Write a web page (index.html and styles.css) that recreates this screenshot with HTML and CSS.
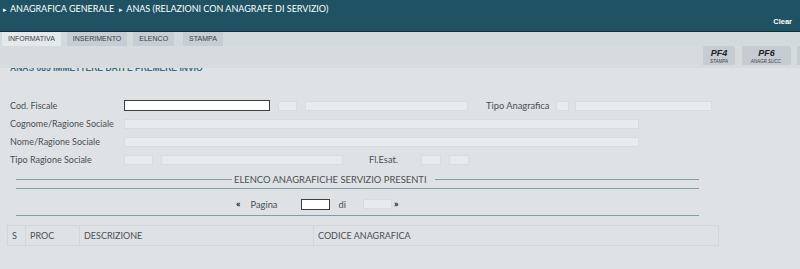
FILE: index.html
```html
<!DOCTYPE html>
<html lang="it">

<head>
  <meta charset="UTF-8" />
  <title>Anagrafica Generale - ANAS</title>
  <link rel="stylesheet" href="styles.css">
</head>

<body>
  <!-- Header -->
  <div class="header">
    <div class="crumbs">
      <span class="crumb"><span class="arrow">&#9656;</span>ANAGRAFICA GENERALE</span>
      <span class="crumb"><span class="arrow">&#9656;</span>ANAS (RELAZIONI CON ANAGRAFE DI SERVIZIO)</span>
    </div>
    <div class="clear">Clear</div>
  </div>

  <!-- Tabs -->
  <div class="tabs">
    <div class="tab active">INFORMATIVA</div>
    <div class="tab">INSERIMENTO</div>
    <div class="tab">ELENCO</div>
    <div class="tab">STAMPA</div>
  </div>

  <!-- Function keys -->
  <div class="toolbar">
    <div class="pf"><b>PF4</b><span>STAMPA</span></div>
    <div class="pf"><b>PF6</b><span>ANAGR.SUCC.</span></div>
    <div class="pf cut"></div>
  </div>

  <div class="content">
    <div class="msg">ANAS 085 IMMETTERE DATI E PREMERE INVIO</div>

    <div class="form">
      <div class="row">
        <label>Cod. Fiscale</label>
        <div class="field active w146"></div>
        <div class="field w19"></div>
        <div class="field w163"></div>
        <label class="inline">Tipo Anagrafica</label>
        <div class="field w12 tight"></div>
        <div class="field w137"></div>
      </div>
      <div class="row">
        <label>Cognome/Ragione Sociale</label>
        <div class="field w515"></div>
      </div>
      <div class="row">
        <label>Nome/Ragione Sociale</label>
        <div class="field w515"></div>
      </div>
      <div class="row">
        <label>Tipo Ragione Sociale</label>
        <div class="field w29"></div>
        <div class="field w182"></div>
        <label class="inline esat">Fl.Esat.</label>
        <div class="field w20"></div>
        <div class="field w20"></div>
      </div>
    </div>

    <!-- Elenco -->
    <div class="section">
      <div class="section-title">
        <div class="line left"></div>
        <span>ELENCO ANAGRAFICHE SERVIZIO PRESENTI</span>
        <div class="line"></div>
      </div>
      <div class="rule"></div>
      <div class="pager">
        <span class="nav">&laquo;</span>
        <span class="pg">Pagina</span>
        <div class="field active w29"></div>
        <span class="di">di</span>
        <div class="field w29"></div>
        <span class="nav">&raquo;</span>
      </div>
      <div class="rule"></div>
    </div>

    <table class="grid">
      <tr>
        <th class="c-s">S</th>
        <th class="c-proc">PROC</th>
        <th class="c-desc">DESCRIZIONE</th>
        <th>CODICE ANAGRAFICA</th>
      </tr>
    </table>
  </div>
</body>

</html>
```

FILE: styles.css
```css
* {
  margin: 0;
  padding: 0;
  box-sizing: border-box;
}

body {
  width: 800px;
  height: 269px;
  overflow: hidden;
  background-color: #dee2e5;
  font-family: "Lato", "Liberation Sans", sans-serif;
  color: #4b4f52;
}

/* Header */
.header {
  height: 32px;
  background-color: #1f5263;
  border-bottom: 1px solid #0f2f3a;
  color: #fff;
  display: flex;
  justify-content: space-between;
  padding: 3px 8px 0 3px;
}

.crumbs {
  display: flex;
  gap: 5px;
  font-size: 9px;
  line-height: 11px;
}

.crumb .arrow {
  font-size: 7px;
  margin-right: 3px;
}

.clear {
  align-self: flex-end;
  margin-bottom: 5px;
  font-family: "Liberation Sans", sans-serif;
  font-weight: bold;
  font-size: 7.5px;
}

/* Tabs */
.tabs {
  display: flex;
  gap: 6px;
  height: 14px;
  padding-left: 2px;
  background-color: #d4d9dc;
}

.tab {
  font-family: "Liberation Sans", sans-serif;
  font-size: 7px;
  line-height: 14px;
  padding: 0 6px;
  background-color: #c6cdd3;
  color: #3a3f44;
}

.tab.active {
  background-color: #e6e9eb;
}

.tab:last-child {
  margin-left: 3px;
}

/* Toolbar */
.toolbar {
  position: relative;
  z-index: 1;
  height: 22px;
  background-color: #d6dbde;
  display: flex;
  justify-content: flex-end;
  gap: 7px;
  overflow: hidden;
}

.pf {
  width: 32px;
  height: 19px;
  background-color: #c5ccd2;
  border-radius: 2px 2px 0 0;
  display: flex;
  flex-direction: column;
  align-items: center;
  font-family: "Liberation Sans", sans-serif;
  font-style: italic;
  color: #222;
}

.pf:nth-child(2) {
  width: 49px;
}

.pf.cut {
  width: 3px;
  margin-left: -1px;
}

.pf b {
  font-size: 9px;
  line-height: 12px;
  margin-top: 1px;
}

.pf span {
  font-size: 4.5px;
  line-height: 5px;
  color: #444;
}

/* Content */
.msg {
  margin-top: -4px;
  padding-left: 10px;
  font-family: "Liberation Sans", sans-serif;
  font-weight: bold;
  font-size: 8.5px;
  line-height: 9px;
  color: #3d6b7e;
}

.form {
  margin-top: 27px;
  padding-left: 10px;
  display: flex;
  flex-direction: column;
  gap: 7px;
}

.row {
  display: flex;
  align-items: center;
  height: 11px;
  gap: 8px;
}

.row label {
  width: 106px;
  font-size: 9px;
  color: #4b4f52;
  white-space: nowrap;
}

.row label.inline {
  width: auto;
  margin-left: 10px;
  font-size: 9.3px;
  margin-right: -1px;
}

.row label.esat {
  margin-left: 18px;
  margin-right: 15px;
}

.field {
  height: 10px;
  background-color: #e8ebed;
  border: 1px solid #d8dcdf;
}

.field.active {
  background-color: #fff;
  border: 1px solid #3b3f42;
  height: 11px;
}

.field.tight + .field {
  margin-left: -2px;
}

.w12 { width: 13px; }
.w19 { width: 19px; }
.w20 { width: 20px; }
.w29 { width: 29px; }
.w137 { width: 137px; }
.w146 { width: 146px; }
.w163 { width: 163px; }
.w182 { width: 182px; }
.w515 { width: 515px; }

/* Section */
.section {
  margin: 8px 0 0 16px;
  width: 683px;
}

.section-title {
  display: flex;
  align-items: center;
  gap: 2px;
  height: 12px;
  font-size: 9.4px;
  color: #4b4f52;
}

.section-title .line {
  flex: 1;
  height: 1px;
  background-color: #7e9ea8;
}

.section-title .line.left {
  flex: none;
  width: 216px;
}

.section-title .line:last-child {
  margin-left: 6px;
}

.rule {
  height: 1px;
  background-color: #7e9ea8;
  margin-top: 3px;
}

.pager {
  display: flex;
  align-items: center;
  height: 24px;
  padding: 6px 0 0 220px;
  font-size: 9.3px;
}

.pager + .rule {
  margin-top: 2px;
}

.pager .nav {
  font-size: 10px;
  font-weight: bold;
  color: #222;
  margin-top: -3px;
}

.pager .pg {
  margin: 0 23px 0 10px;
}

.pager .di {
  margin: 0 17px 0 9px;
}

.pager .nav:last-child {
  margin-left: 2px;
}

/* Table */
.grid {
  margin: 9px 0 0 7px;
  width: 712px;
  border-collapse: collapse;
}

.grid th {
  height: 20px;
  border: 1px solid #d2d7da;
  font-weight: normal;
  font-size: 9px;
  text-align: left;
  padding-left: 4px;
  color: #4b4f52;
}

.c-s { width: 18px; }
.c-proc { width: 54px; }
.c-desc { width: 234px; }
```
